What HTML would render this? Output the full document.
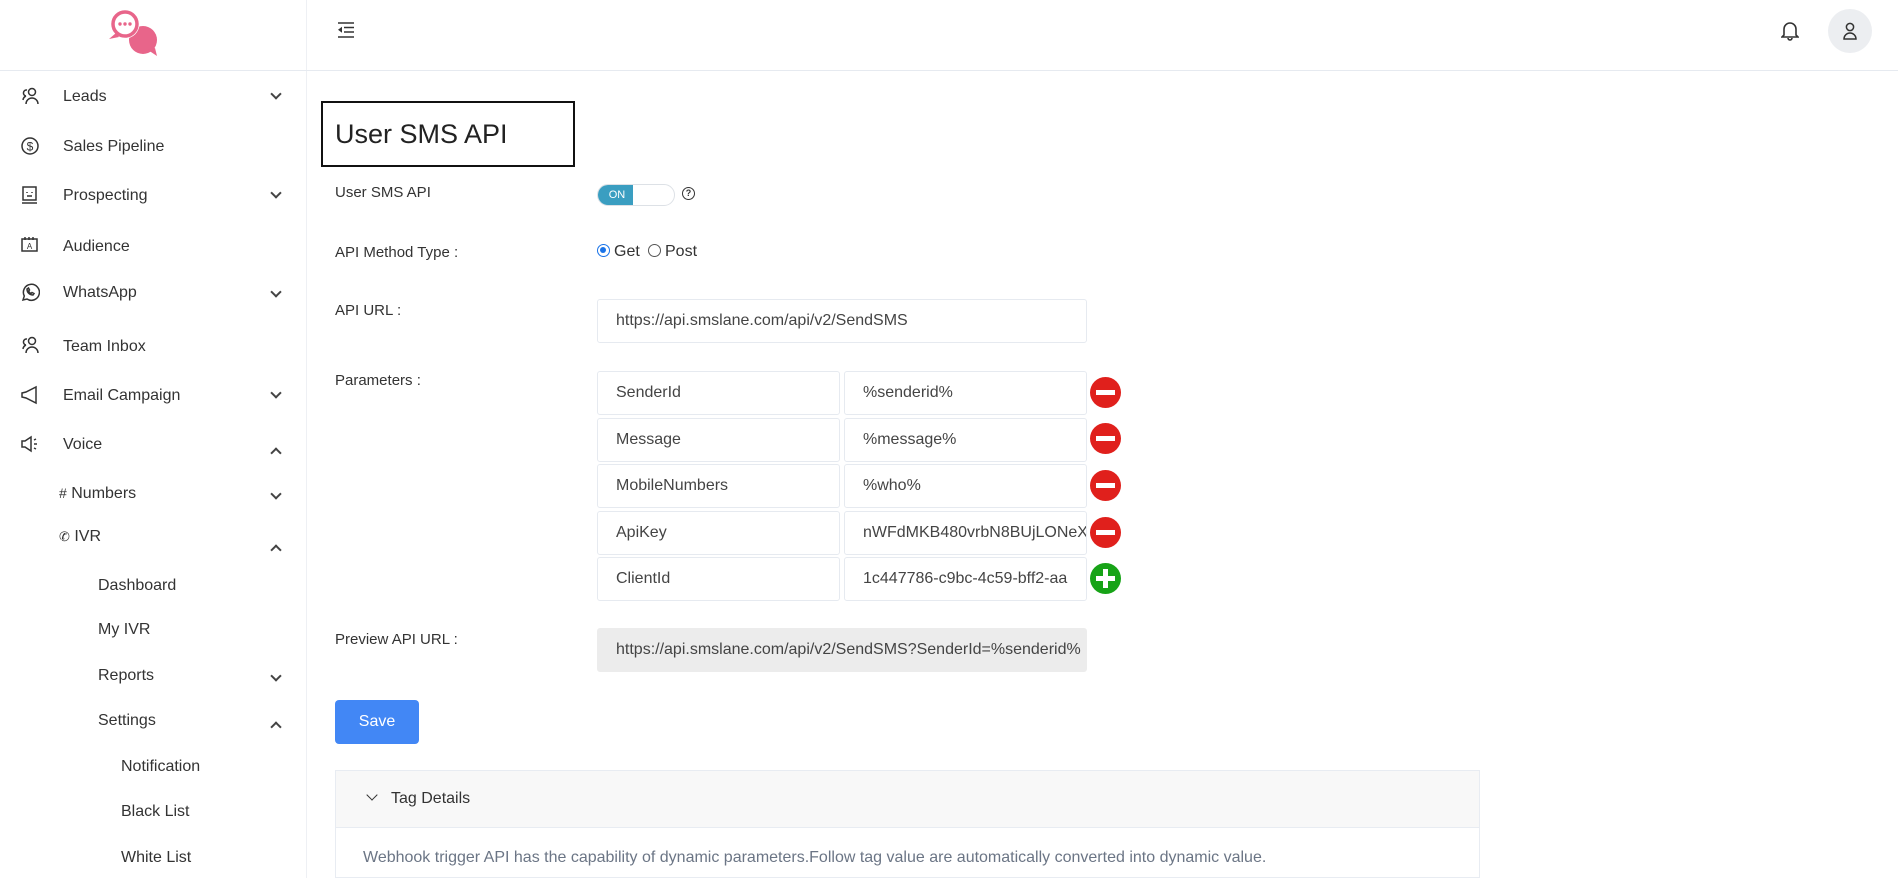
<!DOCTYPE html>
<html><head><meta charset="utf-8"><style>
*{box-sizing:border-box;margin:0;padding:0}
body{width:1898px;height:878px;overflow:hidden;background:#fff;font-family:"Liberation Sans",sans-serif;color:#333;position:relative}
.a{position:absolute}
.side{left:0;top:0;width:307px;height:878px;border-right:1px solid #eef0f4}
.hdr{left:0;top:0;width:1898px;height:71px;border-bottom:1px solid #e6eaf0}
.mi{position:absolute;font-size:16px;color:#333;white-space:nowrap}
.ch{position:absolute;left:272px;width:8px;height:8px;border-right:2px solid #444;border-bottom:2px solid #444}
.dn{transform:rotate(45deg)}
.up{transform:rotate(-135deg)}
.lbl{position:absolute;left:335px;font-size:15px;color:#333}
.inp{position:absolute;border:1px solid #e6eaf0;border-radius:3px;font-size:16px;color:#444;padding-left:18px;padding-right:14px;display:flex;align-items:center;white-space:nowrap;overflow:hidden;background:#fff}
.ic{position:absolute;left:1090px;width:31px;height:31px;border-radius:50%;background:#e0201c}
.ic:after{content:"";position:absolute;left:6px;top:13px;width:19px;height:5px;background:#fff}
</style></head><body>
<div class="a side"></div>
<div class="a hdr"></div>
<!-- logo -->
<svg class="a" style="left:108px;top:6px" width="52" height="52" viewBox="0 0 52 52">
<circle cx="35" cy="34" r="14" fill="#e8658a"/>
<path d="M40 44 l9 6 -2 -8z" fill="#e8658a"/>
<circle cx="17" cy="18" r="14.5" fill="#fff"/>
<circle cx="17" cy="18" r="12" fill="#fff" stroke="#e8658a" stroke-width="3.5"/>
<path d="M8 27 l-7 6 10 -2z" fill="#e8658a"/>
<circle cx="12" cy="18" r="1.7" fill="#e8658a"/><circle cx="17" cy="18" r="1.7" fill="#e8658a"/><circle cx="22" cy="18" r="1.7" fill="#e8658a"/>
</svg>
<!-- header icons -->
<svg class="a" style="left:337px;top:22px" width="18" height="16" viewBox="0 0 18 16"><g stroke="#333" stroke-width="1.6"><path d="M1 1h16M7 5.5h10M7 10h10M1 15h16"/></g><path d="M1 7.7l4-3v6z" fill="#333"/></svg>
<svg class="a" style="left:1781px;top:20px" width="18" height="21" viewBox="0 0 18 21"><path d="M3 15V9a6 6 0 0 1 12 0v6l2 2H1z M7 18a2 2 0 0 0 4 0" fill="none" stroke="#333" stroke-width="1.6"/></svg>
<div class="a" style="left:1828px;top:9px;width:44px;height:44px;border-radius:50%;background:#eceef1"></div>
<svg class="a" style="left:1842px;top:22px" width="16" height="18" viewBox="0 0 16 18"><circle cx="8" cy="5" r="3.6" fill="none" stroke="#333" stroke-width="1.5"/><path d="M2 17a6 6 0 0 1 12 0z" fill="none" stroke="#333" stroke-width="1.5"/></svg>
<!-- sidebar items -->
<svg class="a" style="left:21px;top:86px" width="20" height="20" viewBox="0 0 20 20" fill="none" stroke="#333" stroke-width="1.5"><circle cx="11" cy="6" r="3.5"/><path d="M5 18a6 6 0 0 1 12 0M6 4a3 3 0 0 0-1 6M2 14a5 5 0 0 1 3-4"/></svg>
<div class="mi" style="left:63px;top:88px">Leads</div><div class="ch dn" style="top:90px"></div>
<svg class="a" style="left:20px;top:136px" width="20" height="20" viewBox="0 0 20 20"><circle cx="10" cy="10" r="8" fill="none" stroke="#333" stroke-width="1.5"/><text x="10" y="14.5" font-size="12" text-anchor="middle" fill="#333" font-family="Liberation Sans">$</text></svg>
<div class="mi" style="left:63px;top:138px">Sales Pipeline</div>
<svg class="a" style="left:20px;top:185px" width="20" height="20" viewBox="0 0 20 20" fill="none" stroke="#333" stroke-width="1.5"><rect x="3" y="2" width="13" height="13"/><path d="M2 18h15M7 7v1M12 7v1M7 11h5"/></svg>
<div class="mi" style="left:63px;top:187px">Prospecting</div><div class="ch dn" style="top:189px"></div>
<svg class="a" style="left:20px;top:236px" width="20" height="18" viewBox="0 0 20 18" fill="none" stroke="#333" stroke-width="1.5"><rect x="2" y="3" width="15" height="12"/><path d="M5 1v3M9 1v3M13 1v3"/><text x="9.5" y="13" font-size="8" text-anchor="middle" fill="#333" stroke="none">A</text></svg>
<div class="mi" style="left:63px;top:238px">Audience</div>
<svg class="a" style="left:20px;top:282px" width="20" height="20" viewBox="0 0 20 20" fill="none" stroke="#333" stroke-width="1.5"><path d="M3 18l1.3-4A8 8 0 1 1 7 17z"/><path d="M7 7c0 4 3 6 6 6l1-1.5-2-1-1 1c-1-.5-2-1.5-2.5-2.5l1-1-1-2z"/></svg>
<div class="mi" style="left:63px;top:284px">WhatsApp</div><div class="ch dn" style="top:288px"></div>
<svg class="a" style="left:21px;top:335px" width="20" height="20" viewBox="0 0 20 20" fill="none" stroke="#333" stroke-width="1.5"><circle cx="11" cy="6" r="3.5"/><path d="M5 18a6 6 0 0 1 12 0M6 4a3 3 0 0 0-1 6M2 14a5 5 0 0 1 3-4"/></svg>
<div class="mi" style="left:63px;top:338px">Team Inbox</div>
<svg class="a" style="left:20px;top:385px" width="20" height="20" viewBox="0 0 20 20" fill="none" stroke="#333" stroke-width="1.5"><path d="M2 8v4l4 1 10 5V2L6 7z"/></svg>
<div class="mi" style="left:63px;top:387px">Email Campaign</div><div class="ch dn" style="top:389px"></div>
<svg class="a" style="left:20px;top:434px" width="20" height="20" viewBox="0 0 20 20" fill="none" stroke="#333" stroke-width="1.5"><path d="M2 7v6h3l6 4V3L5 7z M14 6l2-1M14 10h3M14 14l2 1"/></svg>
<div class="mi" style="left:63px;top:436px">Voice</div><div class="ch up" style="top:449px"></div>
<div class="mi" style="left:59px;top:485px"><span style="font-size:14px">#</span> Numbers</div><div class="ch dn" style="top:490px"></div>
<div class="mi" style="left:59px;top:528px"><span style="font-size:13px">✆</span> IVR</div><div class="ch up" style="top:546px"></div>
<div class="mi" style="left:98px;top:577px">Dashboard</div>
<div class="mi" style="left:98px;top:621px">My IVR</div>
<div class="mi" style="left:98px;top:667px">Reports</div><div class="ch dn" style="top:672px"></div>
<div class="mi" style="left:98px;top:712px">Settings</div><div class="ch up" style="top:723px"></div>
<div class="mi" style="left:121px;top:758px">Notification</div>
<div class="mi" style="left:121px;top:803px">Black List</div>
<div class="mi" style="left:121px;top:849px">White List</div>
<!-- content -->
<div class="a" style="left:321px;top:101px;width:254px;height:66px;border:2px solid #111"></div>
<div class="a" style="left:335px;top:119px;font-size:27px;color:#222">User SMS API</div>
<div class="lbl" style="top:184px">User SMS API</div>
<div class="a" style="left:597px;top:184px;width:78px;height:22px;border:1px solid #dde1e6;border-radius:11px;overflow:hidden"><div style="width:35px;height:22px;background:#3a9ec1;color:#fff;font-size:11px;line-height:21px;text-align:center;padding-left:3px">ON</div></div>
<div class="a" style="left:682px;top:187px;width:13px;height:13px;border:1.5px solid #333;border-radius:50%;font-size:9px;text-align:center;line-height:10px;font-weight:bold">?</div>
<div class="lbl" style="top:244px">API Method Type :</div>
<div class="a" style="left:597px;top:244px;width:13px;height:13px;border:1.5px solid #1a73e8;border-radius:50%"><div style="margin:2px;width:6px;height:6px;border-radius:50%;background:#1a73e8"></div></div>
<div class="a" style="left:614px;top:243px;font-size:16px;color:#333">Get</div>
<div class="a" style="left:648px;top:244px;width:13px;height:13px;border:1px solid #555;border-radius:50%"></div>
<div class="a" style="left:665px;top:243px;font-size:16px;color:#333">Post</div>
<div class="lbl" style="top:302px">API URL :</div>
<div class="inp" style="left:597px;top:299px;width:490px;height:44px">https://api.smslane.com/api/v2/SendSMS</div>
<div class="lbl" style="top:372px">Parameters :</div>
<div class="inp" style="left:597px;top:371px;width:243px;height:44px">SenderId</div><div class="inp" style="left:844px;top:371px;width:243px;height:44px">%senderid%</div><div class="ic" style="top:377px"></div>
<div class="inp" style="left:597px;top:418px;width:243px;height:44px">Message</div><div class="inp" style="left:844px;top:418px;width:243px;height:44px">%message%</div><div class="ic" style="top:423px"></div>
<div class="inp" style="left:597px;top:464px;width:243px;height:44px">MobileNumbers</div><div class="inp" style="left:844px;top:464px;width:243px;height:44px">%who%</div><div class="ic" style="top:470px"></div>
<div class="inp" style="left:597px;top:511px;width:243px;height:44px">ApiKey</div><div class="inp" style="left:844px;top:511px;width:243px;height:44px">nWFdMKB480vrbN8BUjLONeXyz</div><div class="ic" style="top:517px"></div>
<div class="inp" style="left:597px;top:557px;width:243px;height:44px">ClientId</div><div class="inp" style="left:844px;top:557px;width:243px;height:44px">1c447786-c9bc-4c59-bff2-aa</div>
<div class="a" style="left:1090px;top:563px;width:31px;height:31px;border-radius:50%;background:#17a317"><div style="position:absolute;left:6px;top:13px;width:19px;height:5px;background:#fff"></div><div style="position:absolute;left:13px;top:6px;width:5px;height:19px;background:#fff"></div></div>
<div class="lbl" style="top:631px">Preview API URL :</div>
<div class="inp" style="left:597px;top:628px;width:490px;height:44px;background:#ececec;border-color:#ececec">https://api.smslane.com/api/v2/SendSMS?SenderId=%senderid%</div>
<div class="a" style="left:335px;top:700px;width:84px;height:44px;background:#4287f5;border-radius:4px;color:#fff;font-size:16px;line-height:44px;text-align:center">Save</div>
<div class="a" style="left:335px;top:770px;width:1145px;height:108px;border:1px solid #e8ecf2"></div>
<div class="a" style="left:336px;top:771px;width:1143px;height:57px;background:#f8f8f8;border-bottom:1px solid #e8ecf2"></div>
<div class="a" style="left:368px;top:791px;width:8px;height:8px;border-right:1.5px solid #333;border-bottom:1.5px solid #333;transform:rotate(45deg)"></div>
<div class="a" style="left:391px;top:790px;font-size:16px;color:#333">Tag Details</div>
<div class="a" style="left:363px;top:849px;font-size:16px;color:#6b7585">Webhook trigger API has the capability of dynamic parameters.Follow tag value are automatically converted into dynamic value.</div>
</body></html>
